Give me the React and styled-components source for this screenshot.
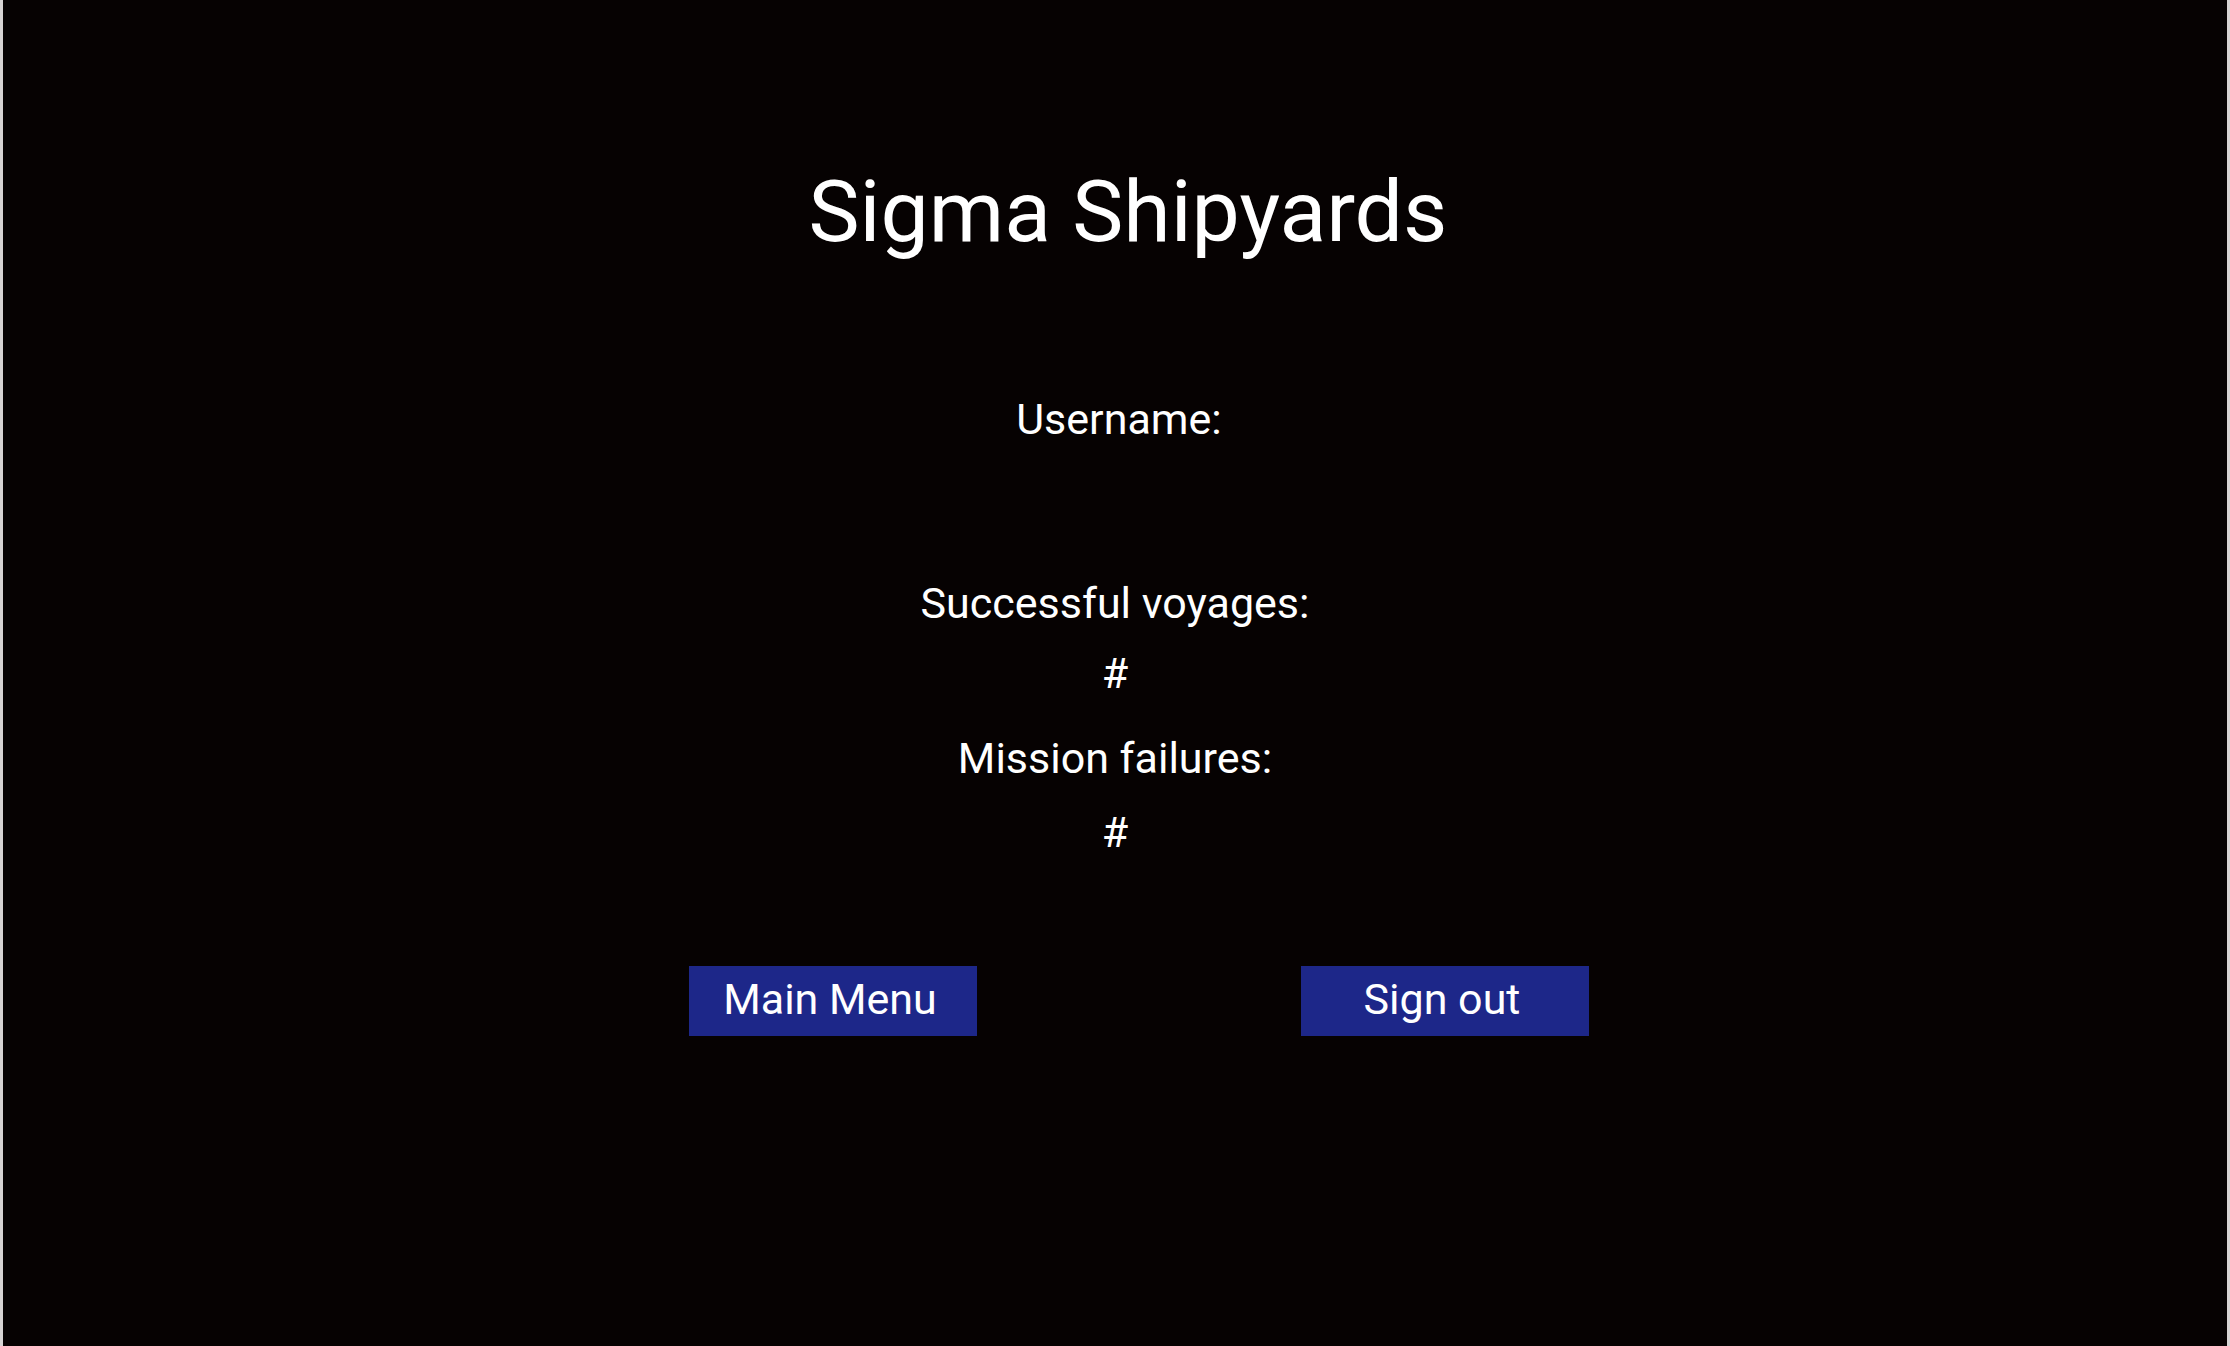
import React from "react";
import styled, { createGlobalStyle } from "styled-components";

const GlobalStyle = createGlobalStyle`
  html, body {
    margin: 0;
    padding: 0;
    background: #060202;
  }
  body {
    font-family: Roboto, "Liberation Sans", Arial, sans-serif;
  }
  * { box-sizing: border-box; }
`;

const Page = styled.div`
  min-height: 100vh;
  background: #060202;
  border-left: 3px solid #d6d4d4;
  border-right: 3px solid #d6d4d4;
  display: flex;
  flex-direction: column;
  align-items: center;
  color: #ffffff;
  font-family: Roboto, "Liberation Sans", Arial, sans-serif;
`;

const Title = styled.h1`
  margin: 162px 0 0;
  padding-left: 26px;
  font-size: 86px;
  line-height: 100px;
  font-weight: 400;
`;

const Label = styled.div`
  margin-top: ${(p) => p.$gap}px;
  padding-left: ${(p) => p.$shift || 0}px;
  font-size: 43px;
  line-height: 50px;
  font-weight: 400;
`;

const Count = styled.div`
  margin-top: ${(p) => p.$gap}px;
  font-size: 43px;
  line-height: 50px;
  font-weight: 400;
`;

const ButtonRow = styled.div`
  margin-top: 109px;
  padding-left: 47px;
  display: flex;
  justify-content: center;
  gap: 324px;
`;

const Button = styled.button`
  width: 288px;
  height: 70px;
  padding: 0 5px 3px 0;
  border: none;
  background: #1d2789;
  color: #ffffff;
  font-family: Roboto, "Liberation Sans", Arial, sans-serif;
  font-size: 43px;
  line-height: 67px;
  font-weight: 400;
  cursor: pointer;
`;

export default function App() {
  return (
    <>
      <GlobalStyle />
      <Page>
        <Title>Sigma Shipyards</Title>
        <Label $gap={132} $shift={8}>Username:</Label>
        <Label $gap={134}>Successful voyages:</Label>
        <Count $gap={20}>#</Count>
        <Label $gap={35}>Mission failures:</Label>
        <Count $gap={24}>#</Count>
        <ButtonRow>
          <Button>Main Menu</Button>
          <Button>Sign out</Button>
        </ButtonRow>
      </Page>
    </>
  );
}
